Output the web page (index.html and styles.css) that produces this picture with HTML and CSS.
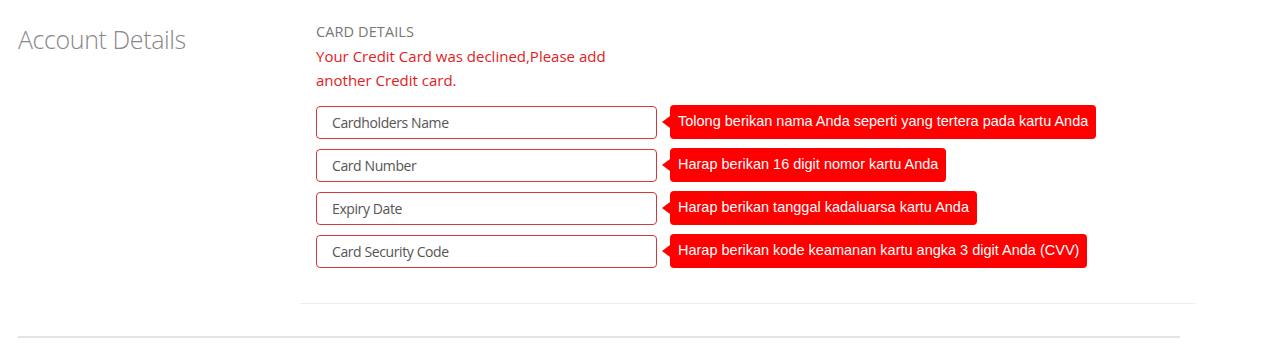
FILE: index.html
```html
<!DOCTYPE html>
<html lang="en">
<head>
    <meta charset="UTF-8">
    <title>Account Details</title>
    <link rel="stylesheet" href="styles.css">
</head>
<body>

<div class="account">
    <h2 class="account-title">Account Details</h2>

    <div class="card-section">
        <h4>CARD DETAILS</h4>
        <p class="declined">Your Credit Card was declined,Please add<br>another Credit card.</p>

        <div class="field">
            <input type="text" placeholder="Cardholders Name">
            <span class="tip">Tolong berikan nama Anda seperti yang tertera pada kartu Anda</span>
        </div>
        <div class="field">
            <input type="text" placeholder="Card Number">
            <span class="tip">Harap berikan 16 digit nomor kartu Anda</span>
        </div>
        <div class="field">
            <input type="text" placeholder="Expiry Date">
            <span class="tip">Harap berikan tanggal kadaluarsa kartu Anda</span>
        </div>
        <div class="field">
            <input type="text" placeholder="Card Security Code">
            <span class="tip">Harap berikan kode keamanan kartu angka 3 digit Anda (CVV)</span>
        </div>
    </div>
</div>

<hr class="bottom-rule">

</body>
</html>
```

FILE: styles.css
```css
body {
    margin: 0;
    font-family: "Open Sans", "Liberation Sans", sans-serif;
    background: #fff;
}
.account {
    display: grid;
    grid-template-columns: 282px 895px;
    padding-left: 18px;
}
.account-title {
    margin: 22px 0 0;
    font-size: 25px;
    font-weight: 300;
    color: #888;
    letter-spacing: -0.4px;
}
.card-section {
    padding: 23px 0 35px 16px;
    border-bottom: 1px solid #eee;
}
.card-section h4 {
    margin: 0;
    font-size: 14.5px;
    font-weight: 400;
    line-height: 18px;
    color: #777;
    letter-spacing: 0.1px;
}
.declined {
    margin: 3px 0 13px;
    font-size: 15px;
    line-height: 24px;
    color: #e41b1b;
}
.field {
    display: flex;
    align-items: center;
    margin-bottom: 9px;
}
.field:last-child {
    margin-bottom: 0;
}
.field input {
    box-sizing: border-box;
    width: 341px;
    height: 33px;
    padding: 0 15px;
    border: 1px solid #d0393c;
    border-radius: 4px;
    font-family: inherit;
    font-size: 14px;
    letter-spacing: -0.4px;
    color: #555;
    outline: none;
}
.field input::placeholder {
    color: #555;
}
.tip {
    position: relative;
    margin-left: 13px;
    padding: 0 8px;
    height: 34px;
    line-height: 33px;
    background: #f00;
    color: #fff;
    border-radius: 4px;
    font-family: "Liberation Sans", Arial, sans-serif;
    font-size: 14.5px;
    white-space: nowrap;
}
.tip::before {
    content: "";
    position: absolute;
    left: -8px;
    top: 11px;
    border-style: solid;
    border-width: 6px 8px 6px 0;
    border-color: transparent #f00 transparent transparent;
}
.bottom-rule {
    margin: 32px 0 0 18px;
    width: 1162px;
    height: 2px;
    border: none;
    background: #e3e3e3;
}
```
